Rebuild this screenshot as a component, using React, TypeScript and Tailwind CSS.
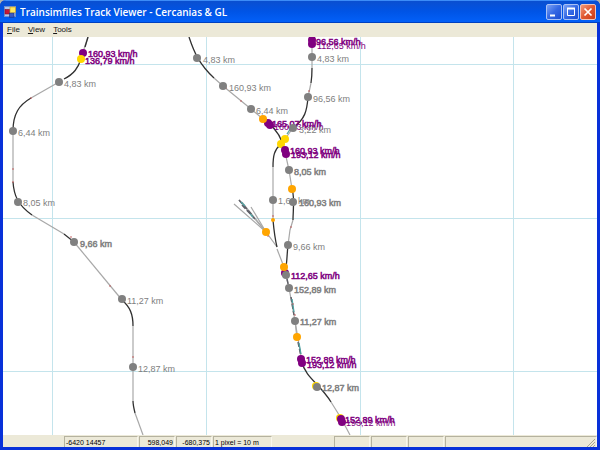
import React from "react";

type Tone = "gray" | "purple" | "orange" | "gold";

const fills: Record<Tone, string> = {
  gray: "fill-[#808080]",
  purple: "fill-[#800080]",
  orange: "fill-[#ffa500]",
  gold: "fill-[#ffd700]",
};

const gridX = [49, 203, 357, 510];
const gridY = [27, 181, 334];

const straights = [
  "M85 0 L80 15",
  "M56 45 L28 61",
  "M10 94 V145",
  "M29 178 L61 197",
  "M71 205 L119 263",
  "M130 289 V364",
  "M132 376 L140 398",
  "M211 41 L220 49 L248 72 L260 82",
  "M282 115 L286 133 L289 152",
  "M290 183 L287 193 L285 208",
  "M283 238 L286 251 L292 284 L299 325",
  "M328 365 L338 381 L347 398",
  "M309 0 V31",
  "M308 46 L305 60",
  "M290 91 L282 102",
  "M270 130 V183",
  "M274 212 L281 230",
  "M231 167 L263 195 L274 210",
  "M236 163 L263 195",
  "M239 165 L263 195",
  "M248 170 L263 195",
  "M292 284 L294 301",
];

const curves = [
  "M85 0 L82 10",
  "M78 22 C75 31 71 37 61 42",
  "M28 61 C16 68 10 77 10 94",
  "M10 145 C11 159 15 168 29 178",
  "M61 197 L71 205",
  "M119 263 C127 270 130 277 130 289",
  "M130 364 C130 368 131 372 132 376",
  "M186 0 C191 15 196 27 211 41",
  "M264 85 C272 91 279 99 282 115",
  "M289 152 C292 160 290 174 290 183",
  "M285 208 C284 217 284 224 283 230",
  "M299 325 C302 340 318 348 328 365",
  "M309 31 C309 37 309 40 308 46",
  "M305 60 C304 74 302 82 290 91",
  "M278 107 C271 113 270 119 270 130",
  "M270 183 C271 194 272 202 274 210",
];

const yardRails = [
  "M236 163 L249 178",
  "M239 168 L252 182",
  "M284 242 L287 255",
  "M288 260 L291 278",
  "M295 305 L299 324",
];

const sidings = ["M288 91 L284 97", "M238 165 L242 169", "M289 262 L291 275", "M247 177 L250 180", "M296 306 L298 317"];

const signals = [
  [28, 61], [10, 132], [10, 145], [68, 200], [107, 249], [118, 261], [130, 320],
  [223, 51], [238, 64], [306, 54], [288, 190], [270, 179], [276, 108], [265, 199],
  [286, 249], [292, 278], [290, 267], [298, 319],
];

const dots: [number, number, Tone, number?][] = [
  [80, 16, "purple"], [78, 22, "gold"], [56, 45, "gray"], [10, 94, "gray"],
  [15, 165, "gray"], [71, 205, "gray"], [119, 262, "gray"], [130, 330, "gray"],
  [194, 21, "gray"], [220, 49, "gray"], [248, 72, "gray"], [265, 86, "purple"],
  [267, 88, "purple"], [260, 82, "orange"], [309, 3, "purple"], [309, 7, "purple"],
  [309, 20, "gray"], [305, 60, "gray"], [290, 91, "gray"], [282, 102, "gold"],
  [278, 107, "gold"], [282, 113, "purple"], [283, 117, "purple"], [286, 133, "gray"],
  [289, 152, "orange"], [270, 163, "gray"], [290, 165, "gray"], [270, 183, "orange", 2],
  [263, 195, "orange"], [285, 208, "gray"], [282, 236, "purple"], [281, 230, "orange"],
  [283, 238, "gray"], [286, 251, "gray"], [292, 284, "gray"], [294, 300, "orange"],
  [298, 322, "purple"], [299, 326, "purple"], [313, 349, "gold"], [314, 350, "gray"],
  [337, 381, "gold"], [338, 382, "purple"], [339, 385, "purple"],
];

const labels: [number, number, string, Tone, boolean?][] = [
  [85, 20, "160,93 km/h", "purple", true],
  [82, 27, "136,79 km/h", "purple", true],
  [61, 50, "4,83 km", "gray"],
  [15, 99, "6,44 km", "gray"],
  [20, 169, "8,05 km", "gray"],
  [77, 210, "9,66 km", "gray", true],
  [124, 267, "11,27 km", "gray"],
  [135, 335, "12,87 km", "gray"],
  [200, 26, "4,83 km", "gray"],
  [226, 54, "160,93 km", "gray"],
  [253, 77, "6,44 km", "gray"],
  [269, 90, "165,07 km/h", "purple", true],
  [271, 93, "160,93 km/h", "purple"],
  [313, 8, "96,56 km/h", "purple", true],
  [314, 12, "112,65 km/h", "purple"],
  [314, 25, "4,83 km", "gray"],
  [310, 65, "96,56 km", "gray"],
  [296, 96, "3,22 km", "gray"],
  [287, 117, "160,93 km/h", "purple", true],
  [288, 121, "193,12 km/h", "purple", true],
  [291, 138, "8,05 km", "gray", true],
  [275, 167, "1,61 km", "gray"],
  [296, 169, "160,93 km", "gray", true],
  [290, 213, "9,66 km", "gray"],
  [288, 242, "112,65 km/h", "purple", true],
  [291, 256, "152,89 km", "gray", true],
  [297, 288, "11,27 km", "gray", true],
  [303, 326, "152,89 km/h", "purple", true],
  [304, 331, "193,12 km/h", "purple", true],
  [319, 354, "12,87 km", "gray", true],
  [342, 386, "152,89 km/h", "purple", true],
  [343, 389, "193,12 km/h", "purple"],
];

function TrackMap() {
  return (
    <svg className="block h-full w-full" role="img" aria-label="Track map" fontFamily="'Liberation Sans', Arial, sans-serif" fontSize="9">
      <g className="stroke-[#c4e4ec]" strokeWidth="1" shapeRendering="crispEdges">
        {gridX.map((x) => <line key={x} x1={x} x2={x} y1="0" y2="100%" />)}
        {gridY.map((y) => <line key={y} x1="0" x2="100%" y1={y} y2={y} />)}
      </g>
      <g fill="none" strokeWidth="1.2">
        <g className="stroke-[#a8a8a8]">{straights.map((d) => <path key={d} d={d} />)}</g>
        <g className="stroke-[#303030]" strokeWidth="1.3">{curves.map((d) => <path key={d} d={d} />)}</g>
        <g className="stroke-[#606068]" strokeWidth="1.5" strokeDasharray="5 2">{yardRails.map((d) => <path key={d} d={d} />)}</g>
        <g className="stroke-[#4fa3a3]" strokeWidth="1.3">{sidings.map((d) => <path key={d} d={d} />)}</g>
      </g>
      {signals.map(([x, y]) => <circle key={`${x}-${y}`} cx={x} cy={y} r="0.8" className="fill-[#c05050]" />)}
      {labels.map(([x, y, text, tone, heavy]) => (
        <text key={`${x}-${y}`} x={x} y={y} className={`${fills[tone]} ${heavy ? (tone === "gray" ? "stroke-[#808080]" : "stroke-[#800080]") : "stroke-none"}`} strokeWidth="0.5">
          {text}
        </text>
      ))}
      {dots.map(([x, y, tone, r = 4]) => <circle key={`${x}-${y}`} cx={x} cy={y} r={r} className={fills[tone]} />)}
    </svg>
  );
}

function CaptionButton({ label, close, children }: { label: string; close?: boolean; children: React.ReactNode }) {
  return (
    <button
      type="button"
      aria-label={label}
      className={`flex size-4 items-center justify-center rounded-xs border ${close ? "border-[#f3c4b8] bg-linear-to-br from-[#f09878] via-[#e05830] to-[#c83c18]" : "border-[#a9c1f5] bg-linear-to-br from-[#7ba0f4] via-[#3468e4] to-[#1c4cd0]"}`}
    >
      <svg viewBox="0 0 14 14" className="size-3.5 fill-none stroke-white">{children}</svg>
    </button>
  );
}

function Panel({ className, children }: { className: string; children?: React.ReactNode }) {
  return (
    <div className={`h-full overflow-hidden whitespace-nowrap border-t border-l border-[#b5b29f] border-r border-r-[#f8f6ec] px-px leading-[11px] ${className}`}>
      {children}
    </div>
  );
}

const menus = [["F", "ile"], ["V", "iew"], ["T", "ools"]];

export default function App() {
  return (
    <div className="h-screen bg-[#b0b4b0]">
      <div className="flex h-full flex-col overflow-hidden rounded-t-md bg-[#0831d9] font-['Liberation_Sans',Arial,sans-serif]">
        <header className="flex h-[23px] shrink-0 items-center bg-linear-to-b from-[#0a4fd0] via-[#0054e6] via-50% to-[#0360f8] border-t border-t-[#3c8cf8] border-b border-b-[#0040c0] pl-1 pr-1 pt-px">
          <svg viewBox="0 0 13 12" className="h-3 w-[13px] shrink-0" aria-hidden="true">
            <rect x="0.5" y="0.5" width="11" height="10" fill="#b8c8e8" stroke="#7090d0" />
            <rect x="1" y="3.5" width="4.5" height="4.5" fill="#c81838" stroke="#801028" strokeWidth="0.6" />
            <rect x="6" y="1" width="5.5" height="5.5" fill="#ffe860" stroke="#c09820" strokeWidth="0.6" />
            <rect x="5.5" y="7.2" width="4.5" height="4" fill="#3858c8" stroke="#183080" strokeWidth="0.6" />
          </svg>
          <h1 className="ml-[3px] flex-1 truncate font-['Open_Sans','Noto_Sans',sans-serif] text-[10px] font-semibold leading-4 text-white">
            Trainsimfiles Track Viewer - Cercanias &amp; GL
          </h1>
          <div className="flex gap-px">
            <CaptionButton label="Minimize"><path d="M3 10.5h5" strokeWidth="2" /></CaptionButton>
            <CaptionButton label="Maximize"><path d="M3 3.5h8" strokeWidth="2" /><path d="M3.5 4v6.5h7V4" /></CaptionButton>
            <CaptionButton label="Close" close><path d="M3.5 3.5l7 7m0-7l-7 7" strokeWidth="1.7" /></CaptionButton>
          </div>
        </header>
        <div className="mx-[3px] mb-[3px] flex min-h-0 flex-1 flex-col bg-[#ece9d8]">
          <nav className="flex h-3.5 shrink-0 items-center gap-2 pl-1 text-[8px] leading-3 text-[#181818]">
            {menus.map(([key, rest]) => (
              <button key={key} type="button" className="leading-3"><u>{key}</u>{rest}</button>
            ))}
          </nav>
          <main className="min-h-0 flex-1 overflow-hidden bg-white">
            <TrackMap />
          </main>
          <footer className="flex h-3 shrink-0 gap-px pt-px pl-[61px] text-[7px] text-black">
            <Panel className="w-[74px]">-6420 14457</Panel>
            <Panel className="w-9 text-right">598,049</Panel>
            <Panel className="w-9 text-right">-680,375</Panel>
            <Panel className="w-[59px]">1 pixel = 10 m</Panel>
            <div className="w-[60px]" />
            <Panel className="w-9" />
            <Panel className="w-9" />
            <Panel className="w-9" />
            <Panel className="flex flex-1 items-end justify-end">
              <svg viewBox="0 0 8 8" className="size-2 stroke-[#aaa791]" aria-hidden="true"><path d="M0 8L8 0M3 8L8 3M6 8L8 6" /></svg>
            </Panel>
          </footer>
        </div>
      </div>
    </div>
  );
}
